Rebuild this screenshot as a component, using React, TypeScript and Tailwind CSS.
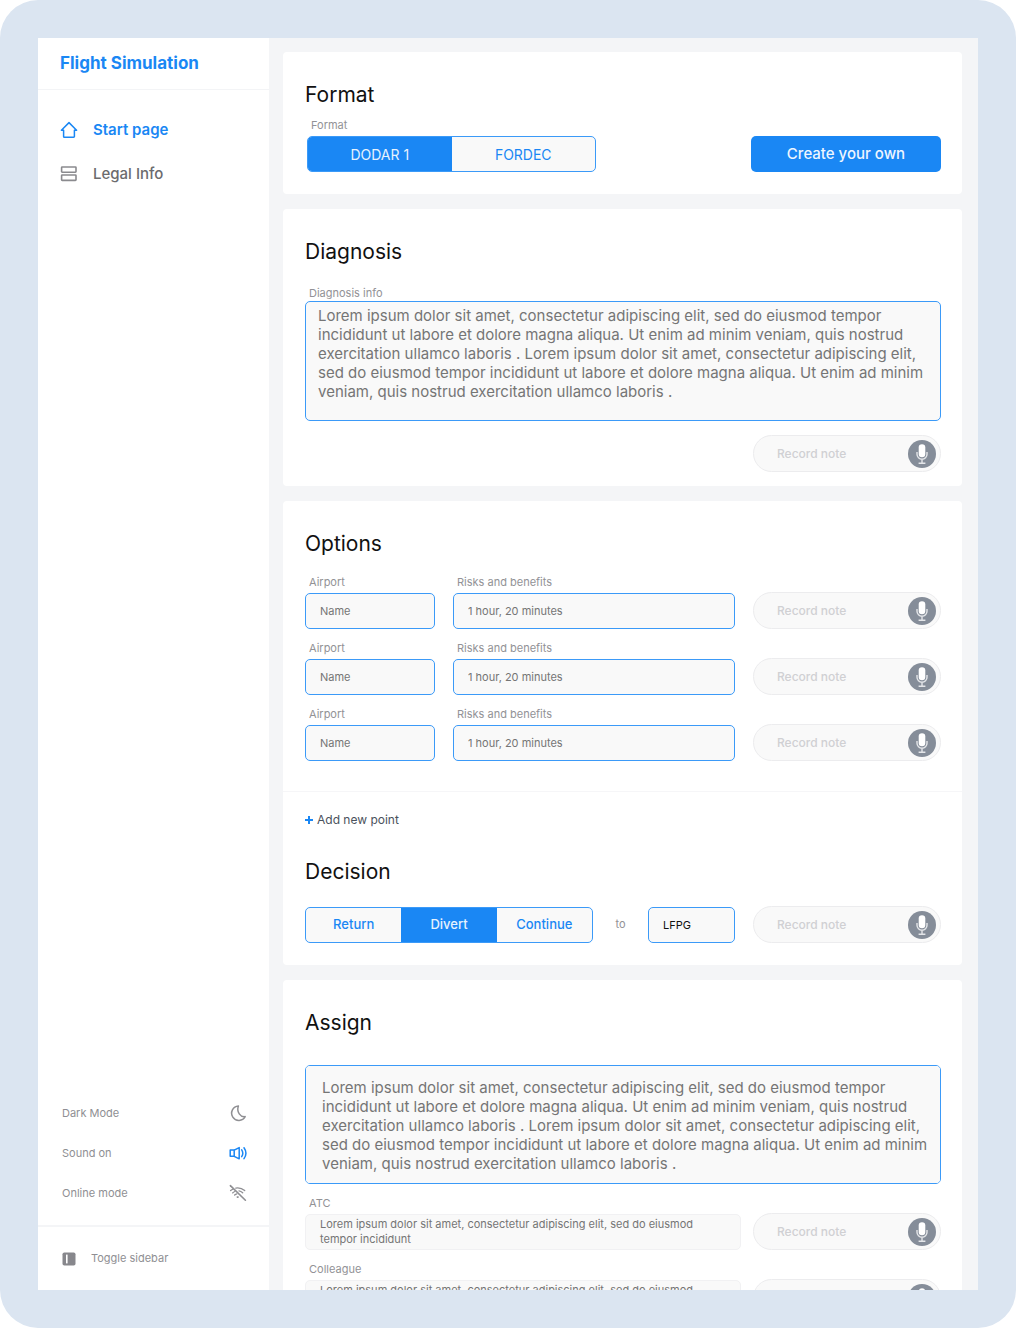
import { useId, useState } from "react";
import type { ReactNode } from "react";
import clsx from "clsx";

const lorem =
  "Lorem ipsum dolor sit amet, consectetur adipiscing elit, sed do eiusmod tempor incididunt ut labore et dolore magna aliqua. Ut enim ad minim veniam, quis nostrud exercitation ullamco laboris . Lorem ipsum dolor sit amet, consectetur adipiscing elit, sed do eiusmod tempor incididunt ut labore et dolore magna aliqua. Ut enim ad minim veniam, quis nostrud exercitation ullamco laboris .";

const shortLorem =
  "Lorem ipsum dolor sit amet, consectetur adipiscing elit, sed do eiusmod tempor incididunt";

const airports = ["airport-1", "airport-2", "airport-3"];
const assignees = ["ATC", "Colleague"];

function HomeIcon() {
  return (
    <svg viewBox="0 0 18 18" className="h-[18px] w-[18px]" fill="none" stroke="currentColor" strokeWidth="1.5" strokeLinejoin="round" strokeLinecap="round">
      <path d="M3.6 9.2H1.4L9 1.6l7.6 7.6h-2.2v6.2a.8.8 0 0 1-.8.8H4.4a.8.8 0 0 1-.8-.8Z" />
    </svg>
  );
}

function LegalIcon() {
  return (
    <svg viewBox="0 0 18 18" className="h-[18px] w-[18px]" fill="none" stroke="#8a8a8e" strokeWidth="1.6">
      <rect x="1.6" y="2" width="14.4" height="5.2" rx="0.6" />
      <rect x="1.6" y="10" width="14.4" height="5.4" rx="0.6" />
    </svg>
  );
}

function MoonIcon() {
  return (
    <svg viewBox="0 0 18 18" className="h-[18px] w-[18px]" fill="none" stroke="currentColor" strokeWidth="1.5" strokeLinejoin="round">
      <path d="M9.4 2A7.2 7.2 0 1 0 16.2 12.6C11.6 13.4 7.2 8 9.4 2Z" />
    </svg>
  );
}

function SoundIcon() {
  return (
    <svg viewBox="0 0 18 18" className="h-[18px] w-[18px]" fill="none" stroke="currentColor" strokeWidth="1.5" strokeLinejoin="round" strokeLinecap="round">
      <path d="M1.2 6.100h4v6.200h-4ZM5.200 6.100l5-2.500v11.200l-5-2.500" />
      <path d="M12.700 5.800c1.300 2 1.300 4.800 0 6.800M15 3.800c2.300 3.200 2.300 7.600 0 10.800" />
    </svg>
  );
}

function WifiOffIcon() {
  return (
    <svg viewBox="0 0 18 18" className="h-[18px] w-[18px]" fill="none" stroke="currentColor" strokeWidth="1.3" strokeLinecap="round">
      <path d="M1.4 1.6 16.4 16.2" strokeWidth="1.6" />
      <path d="M1.6 6.6c.8-.7 1.6-1.2 2.6-1.6M6.8 4.100c3-.5 6.300.3 8.900 2.500" />
      <path d="M3.600 8.900c.7-.6 1.300-1 2.200-1.400M10 6.900c1.400.2 2.600.9 3.700 1.900" />
      <path d="M5.600 11c.7-.6 1.400-1 2.200-1.200" />
      <path d="M8.300 13.100h.8" strokeWidth="1.600" />
    </svg>
  );
}

function SidebarIcon() {
  return (
    <svg viewBox="0 0 14 14" className="h-[14px] w-[14px]">
      <rect x="0.500" y="0.500" width="13" height="13" rx="1.800" fill="#87878c" />
      <rect x="4" y="2.600" width="1.600" height="8.800" fill="#fff" />
    </svg>
  );
}

function MicIcon() {
  return (
    <svg viewBox="0 0 28 28" className="h-7 w-7 shrink-0">
      <circle cx="14" cy="14" r="14" fill="#858d99" />
      <path d="M9 12v2.300a5 5 0 0 0 10 0V12M14 19.400v3.600M10.600 23.300h6.800" fill="none" stroke="#e4e6e9" strokeWidth="1.400" />
      <rect x="10.700" y="4.200" width="6.600" height="13" rx="3.300" fill="#fff" />
    </svg>
  );
}

function Card({ title, className, children }: { title: string; className?: string; children: ReactNode }) {
  return (
    <section className={clsx("shrink-0 rounded-[4px] bg-white pt-[29px]", className)}>
      <h2 className="px-[22px] text-[21px] leading-[28px] text-[#111]">{title}</h2>
      {children}
    </section>
  );
}

function RecordNote() {
  return (
    <button
      type="button"
      className="flex h-[37px] w-[188px] shrink-0 items-center justify-between rounded-full border border-[#ececee] bg-[#f9f9f9] pl-[23px] pr-1 text-[12px] font-medium text-[#d0d0d3]"
    >
      Record note
      <MicIcon />
    </button>
  );
}

function Segmented({ label, options, initial, className }: { label: string; options: string[]; initial: string; className: string }) {
  const [active, setActive] = useState(initial);
  return (
    <div role="group" aria-label={label} className={clsx("flex h-9 shrink-0 overflow-hidden rounded-[5px] border border-[#3b9af8] bg-[#f9f9f9]", className)}>
      {options.map((o) => (
        <button
          key={o}
          type="button"
          aria-pressed={o === active}
          onClick={() => setActive(o)}
          className={clsx("flex-1", o === active ? "bg-[#1a87f4] text-[#e6f2fe]" : "text-[#1a87f4]")}
        >
          {o}
        </button>
      ))}
    </div>
  );
}

function Field({ label, value, className }: { label: string; value: string; className: string }) {
  const id = useId();
  return (
    <div className={clsx("flex min-w-0 flex-col gap-[3px]", className)}>
      <label htmlFor={id} className="pl-1 text-[11px] leading-[16px] text-[#929296]">
        {label}
      </label>
      <input
        id={id}
        defaultValue={value}
        className="h-9 w-full rounded-[5px] border border-[#3b9af8] bg-[#f9f9f9] px-[14px] text-[11px] text-[#757575]"
      />
    </div>
  );
}

function Sidebar() {
  return (
    <aside className="flex w-[231px] shrink-0 flex-col bg-white">
      <div className="flex h-[52px] items-center border-b border-[#f3f4f6] px-[22px] text-[17px] font-bold text-[#1a87f4]">
        Flight Simulation
      </div>
      <nav className="flex flex-col pt-[18px] text-[15px]">
        <a href="#start" className="flex h-11 items-center gap-[15px] px-[22px] font-semibold text-[#1a87f4]">
          <HomeIcon />
          Start page
        </a>
        <a href="#legal" className="flex h-11 items-center gap-[15px] px-[22px] font-medium text-[#6b6b6e]">
          <LegalIcon />
          Legal Info
        </a>
      </nav>
      <div className="mt-auto flex flex-col pb-3 text-[11px] text-[#8f8f93]">
        <button type="button" className="flex h-10 items-center justify-between pl-6 pr-[22px]">
          Dark Mode
          <MoonIcon />
        </button>
        <button type="button" className="flex h-10 items-center justify-between pl-6 pr-[22px]">
          Sound on
          <span className="text-[#1a87f4]">
            <SoundIcon />
          </span>
        </button>
        <button type="button" className="flex h-10 items-center justify-between pl-6 pr-[22px]">
          Online mode
          <WifiOffIcon />
        </button>
      </div>
      <button
        type="button"
        className="flex h-[65px] items-center gap-[15px] border-t-2 border-[#f4f5f7] px-6 text-[11px] text-[#8f8f93]"
      >
        <SidebarIcon />
        Toggle sidebar
      </button>
    </aside>
  );
}

export default function App() {
  return (
    <div className="h-screen rounded-[38px] bg-[#dbe5f1] p-[38px] font-['Inter',sans-serif]">
      <div className="flex h-full overflow-hidden bg-[#f4f5f7]">
        <Sidebar />
        <main className="flex min-w-0 flex-1 flex-col gap-[15px] overflow-y-auto pl-[14px] pr-4 pt-[14px] [scrollbar-width:none]">
          <Card title="Format" className="pb-[22px]">
            <div className="flex items-end justify-between pl-6 pr-[21px] pt-2">
              <div className="flex flex-col gap-[3px]">
                <span className="pl-1 text-[11px] leading-[16px] text-[#929296]">Format</span>
                <Segmented label="Format" options={["DODAR 1", "FORDEC"]} initial="DODAR 1" className="w-[289px] text-[14px]" />
              </div>
              <button type="button" className="h-9 w-[190px] rounded-[5px] bg-[#1a87f4] text-[15px] font-medium text-[#eef6ff]">
                Create your own
              </button>
            </div>
          </Card>

          <Card title="Diagnosis" className="pb-[14px]">
            <div className="flex flex-col pl-[22px] pr-[21px] pt-[19px]">
              <label htmlFor="diagnosis" className="pl-1 text-[11px] leading-[16px] text-[#929296]">
                Diagnosis info
              </label>
              <textarea
                id="diagnosis"
                defaultValue={lorem}
                className="h-[120px] resize-none rounded-[5px] border border-[#3b9af8] bg-[#f9f9f9] px-3 py-1 text-[15px] leading-[19px] text-[#757575]"
              />
              <div className="flex justify-end pt-[14px]">
                <RecordNote />
              </div>
            </div>
          </Card>

          <Card title="Options" className="pb-[22px]">
            <div className="flex flex-col gap-[11px] pb-[30px] pl-[22px] pr-[21px] pt-4">
              {airports.map((a) => (
                <div key={a} className="flex items-end gap-[18px]">
                  <Field label="Airport" value="Name" className="w-[130px] shrink-0" />
                  <Field label="Risks and benefits" value="1 hour, 20 minutes" className="flex-1" />
                  <RecordNote />
                </div>
              ))}
            </div>
            <div className="border-t border-[#f6f6f8] px-[22px] pb-7 pt-[18px]">
              <button type="button" className="flex h-5 items-center gap-1 text-[12px] text-[#4a515c]">
                <svg viewBox="0 0 8 8" className="h-2 w-2" stroke="#1a87f4" strokeWidth="2">
                  <path d="M4 0v8M0 4h8" />
                </svg>
                Add new point
              </button>
            </div>
            <h2 className="px-[22px] text-[21px] leading-[28px] text-[#111]">Decision</h2>
            <div className="flex items-center pl-[22px] pr-[21px] pt-5">
              <Segmented label="Decision" options={["Return", "Divert", "Continue"]} initial="Divert" className="w-[288px] text-[13px] font-medium" />
              <label htmlFor="airport-code" className="flex-1 text-center text-[11px] text-[#929296]">
                to
              </label>
              <input
                id="airport-code"
                defaultValue="LFPG"
                className="mr-[18px] h-9 w-[87px] rounded-[5px] border border-[#3b9af8] bg-[#f9f9f9] px-[14px] text-[11px] text-[#111]"
              />
              <RecordNote />
            </div>
          </Card>

          <Card title="Assign" className="pb-[22px]">
            <div className="flex flex-col gap-[11px] pl-[22px] pr-[21px] pt-7">
              <textarea
                aria-label="Assign"
                defaultValue={lorem}
                className="h-[119px] resize-none rounded-[5px] border border-[#3b9af8] bg-[#f9f9f9] py-3 pl-4 pr-2 text-[15px] leading-[19px] text-[#757575]"
              />
              {assignees.map((a) => (
                <div key={a} className="flex items-end gap-3">
                  <div className="flex min-w-0 flex-1 flex-col gap-[3px]">
                    <label htmlFor={a} className="pl-1 text-[11px] leading-[16px] text-[#929296]">
                      {a}
                    </label>
                    <textarea
                      id={a}
                      defaultValue={shortLorem}
                      className="h-9 resize-none overflow-hidden rounded-[5px] border border-[#f1f1f3] bg-[#f9f9f9] px-[14px] py-[2px] text-[11px] leading-[15px] text-[#757575]"
                    />
                  </div>
                  <RecordNote />
                </div>
              ))}
            </div>
          </Card>
        </main>
      </div>
    </div>
  );
}
